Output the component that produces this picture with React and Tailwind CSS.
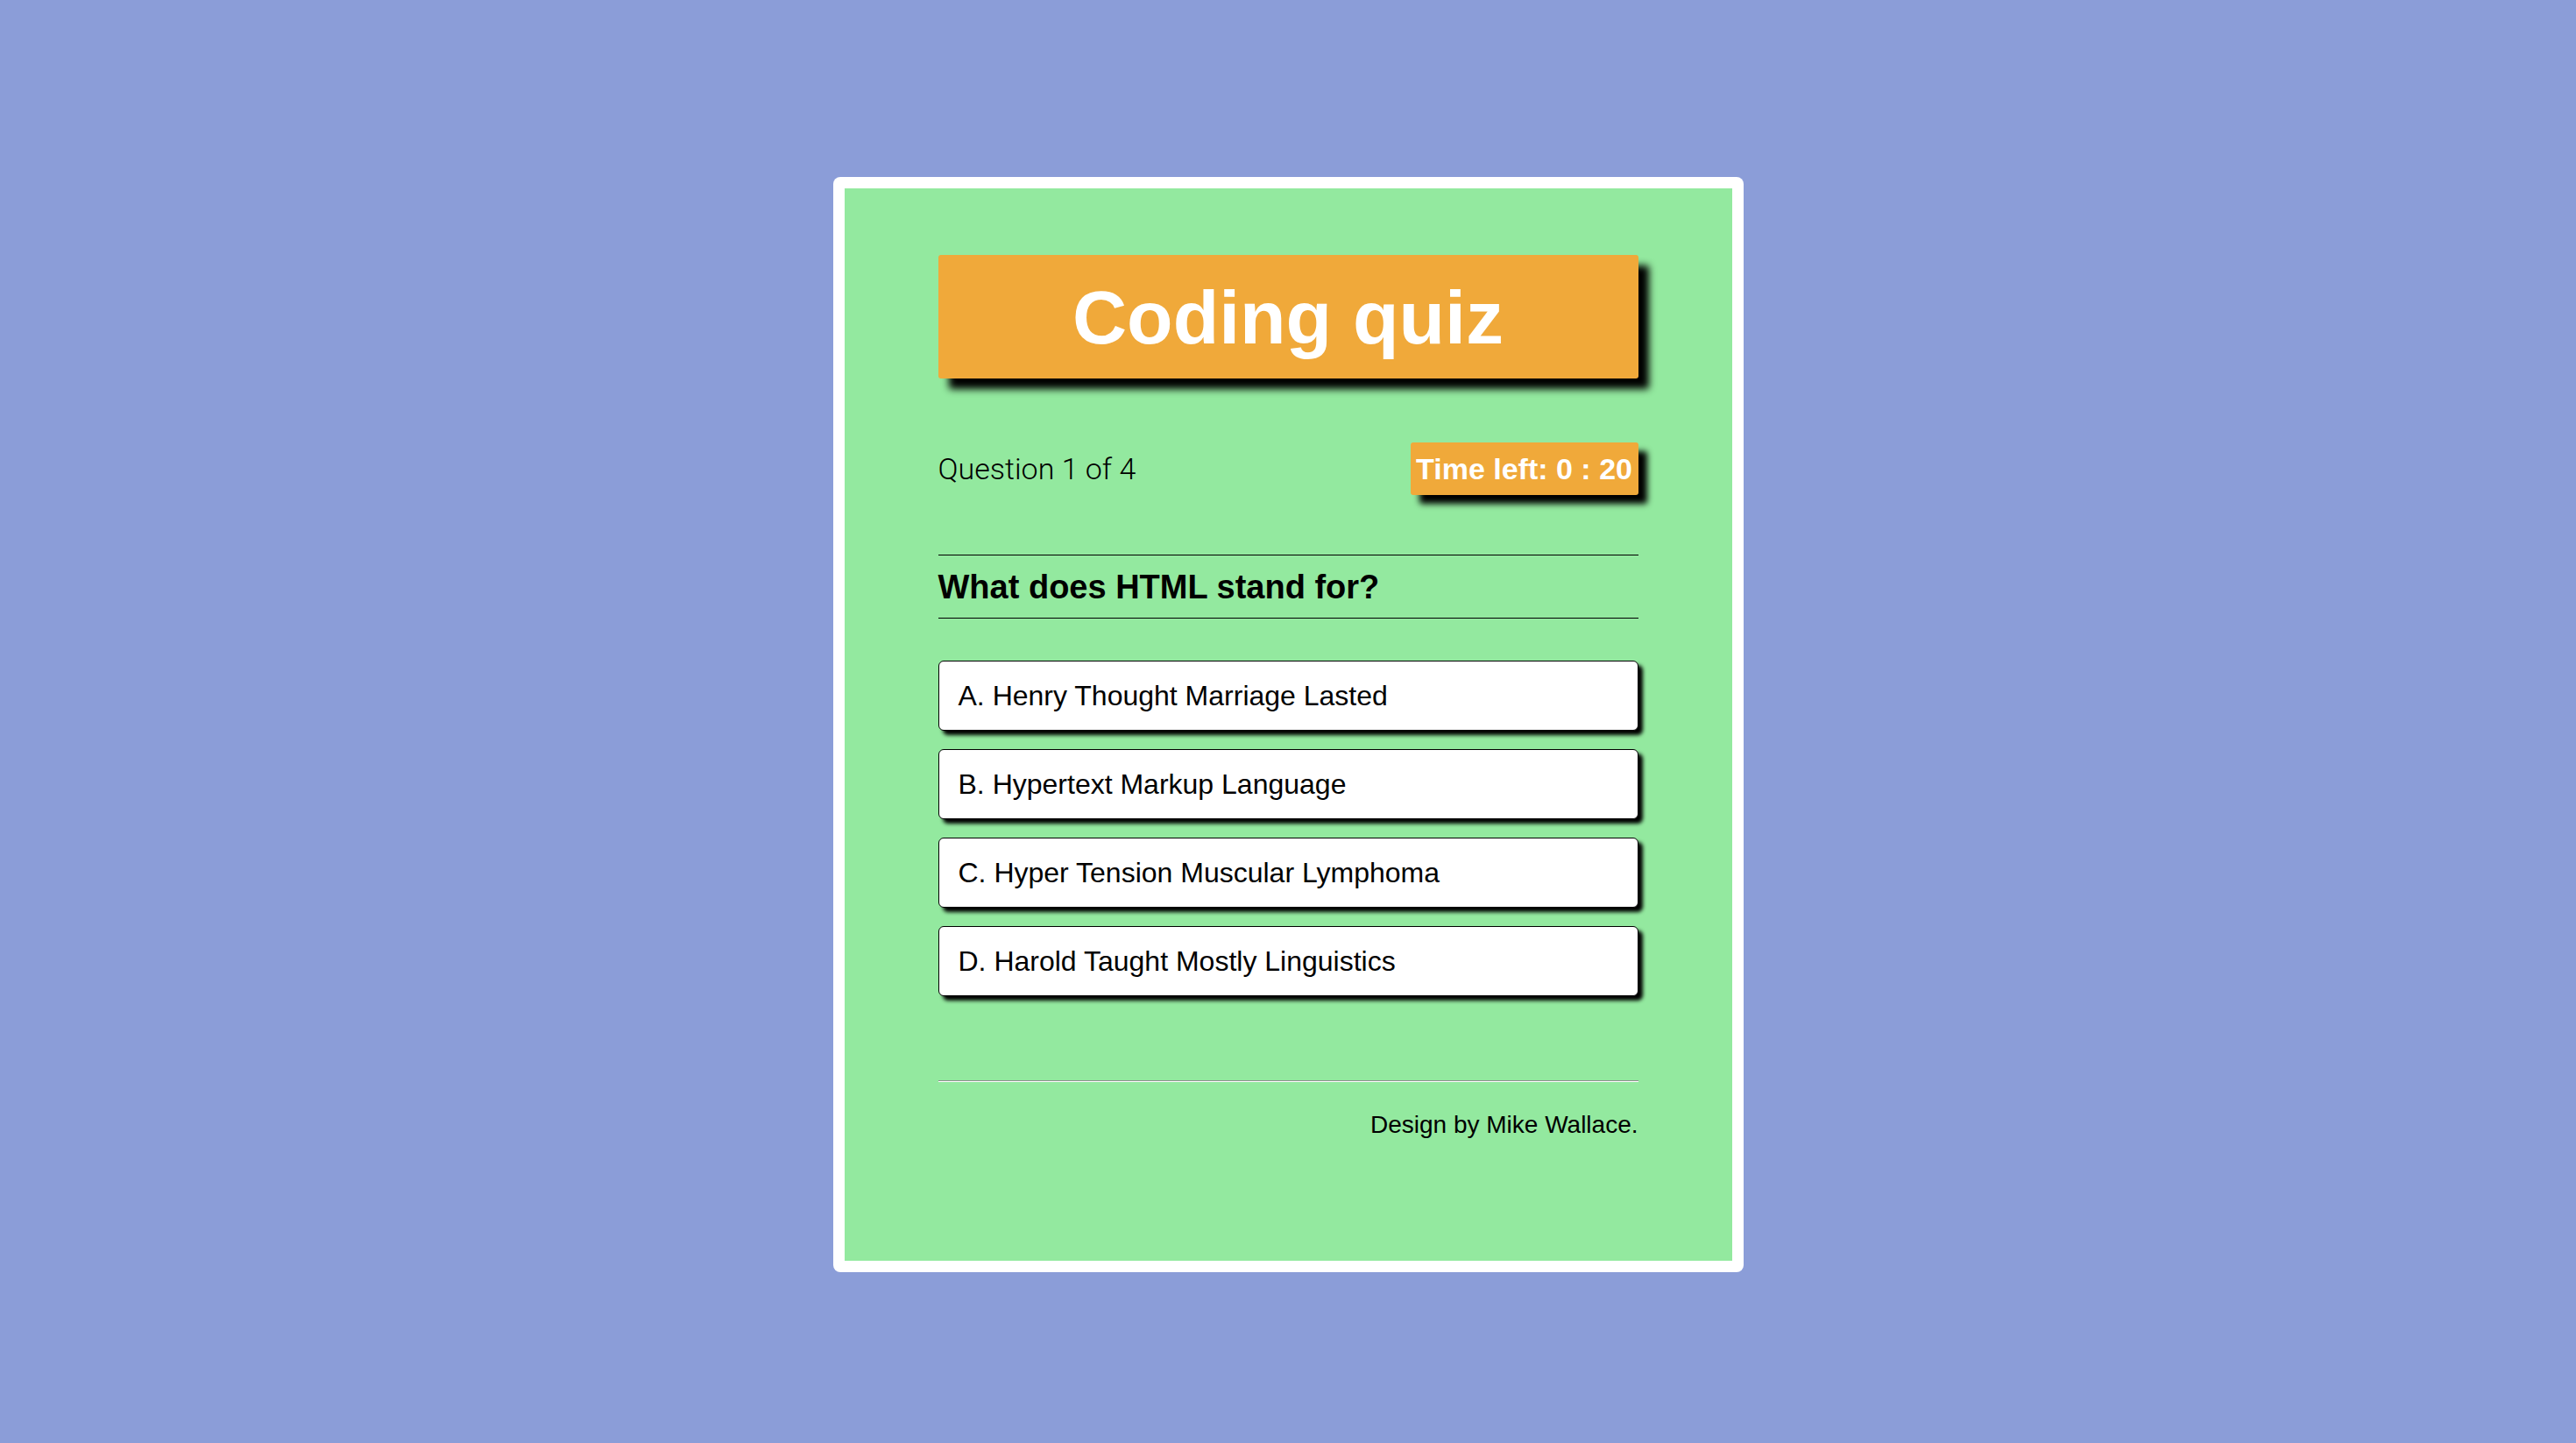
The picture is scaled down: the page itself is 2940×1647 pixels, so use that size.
import React from 'react';

const answers = [
  'A. Henry Thought Marriage Lasted',
  'B. Hypertext Markup Language',
  'C. Hyper Tension Muscular Lymphoma',
  'D. Harold Taught Mostly Linguistics',
];

export default function App() {
  return (
    <main className="min-h-screen w-full bg-[#8b9dd8] flex items-start justify-center pt-[202px] font-['Liberation_Sans',Arial,sans-serif]">
      <div className="w-[1039px] bg-white p-[13px] rounded-[8px]">
        <div className="bg-[#93e99f] px-[107px] pt-[76px] pb-[138px] text-black">
          {/* Title */}
          <div className="h-[141px] bg-[#f0a93a] rounded-[3px] shadow-[12px_12px_8px_#000] flex items-center justify-center">
            <h1 className="text-white font-bold text-[86px] leading-none">Coding quiz</h1>
          </div>

          {/* Progress + timer */}
          <div className="mt-[73px] flex items-center justify-between">
            <span className="font-['Roboto',sans-serif] font-light text-[34px] leading-none">Question 1 of 4</span>
            <div className="h-[60px] w-[260px] bg-[#f0a93a] rounded-[3px] shadow-[10px_10px_7px_#000] flex items-center justify-center">
              <span className="text-white font-bold text-[34px] leading-none">Time left: 0 : 20</span>
            </div>
          </div>

          {/* Question */}
          <div className="mt-[68px] h-[73px] border-y border-black flex items-center">
            <h2 className="font-bold text-[38px] leading-none">What does HTML stand for?</h2>
          </div>

          {/* Answers */}
          <ul className="mt-[48px] flex flex-col gap-[21px]">
            {answers.map((a) => (
              <li
                key={a}
                className="h-[80px] bg-white border border-black rounded-[6px] shadow-[5px_5px_4px_#000] flex items-center pl-[22px] text-[32px] leading-none"
              >
                {a}
              </li>
            ))}
          </ul>

          {/* Footer */}
          <div className="mt-[96px] border-t border-b border-t-[#8f8f8f] border-b-white"></div>
          <p className="mt-[32px] text-right text-[28px] leading-[34px]">Design by Mike Wallace.</p>
        </div>
      </div>
    </main>
  );
}
